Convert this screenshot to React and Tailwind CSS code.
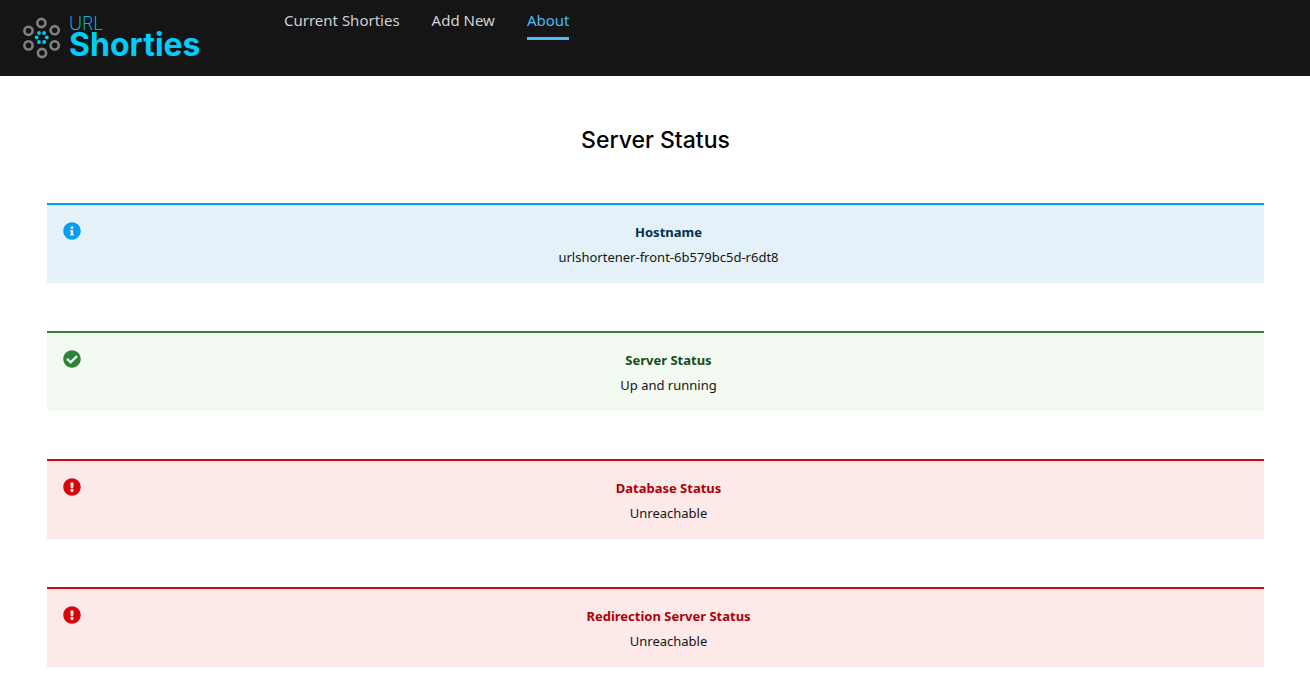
import { FaCheckCircle, FaExclamationCircle, FaInfoCircle } from "react-icons/fa";

const navItems = [
  { label: "Current Shorties", href: "#list" },
  { label: "Add New", href: "#new" },
  { label: "About", href: "#about", current: true },
];

const variants = {
  info: {
    Icon: FaInfoCircle,
    box: "border-[#059fee] bg-[#e4f1f9]",
    icon: "text-[#059fee]",
    title: "text-[#002f55]",
  },
  success: {
    Icon: FaCheckCircle,
    box: "border-[#2f8338] bg-[#f2faf1]",
    icon: "text-[#2f8338]",
    title: "text-[#154d20]",
  },
  danger: {
    Icon: FaExclamationCircle,
    box: "border-[#d6070b] bg-[#fde9e8]",
    icon: "text-[#d6070b]",
    title: "text-[#ad0009]",
  },
};

const statuses = [
  { variant: "info", title: "Hostname", text: "urlshortener-front-6b579bc5d-r6dt8" },
  { variant: "success", title: "Server Status", text: "Up and running" },
  { variant: "danger", title: "Database Status", text: "Unreachable" },
  { variant: "danger", title: "Redirection Server Status", text: "Unreachable" },
];

function LogoMark() {
  return (
    <svg viewBox="0 0 38 42" className="h-[42px] w-[38px] shrink-0" aria-hidden="true">
      <g fill="none" stroke="#808080" strokeWidth="2.6">
        <circle cx="18.4" cy="6" r="4.1" />
        <circle cx="31.7" cy="13.2" r="4.1" />
        <circle cx="31.7" cy="28.4" r="4.1" />
        <circle cx="19" cy="36" r="4.1" />
        <circle cx="5.5" cy="28.4" r="4.1" />
        <circle cx="5.5" cy="13.8" r="4.1" />
      </g>
      <g fill="#00cdfa">
        <circle cx="16" cy="16" r="1.9" />
        <circle cx="21.1" cy="16" r="1.9" />
        <circle cx="23.8" cy="20.4" r="1.9" />
        <circle cx="21.1" cy="25" r="1.9" />
        <circle cx="16" cy="25" r="1.9" />
        <circle cx="13.6" cy="20.4" r="1.9" />
      </g>
    </svg>
  );
}

function StatusAlert({ variant, title, text }) {
  const { Icon, box, icon, title: titleColor } = variants[variant];
  return (
    <section className={`flex gap-2 border-t-2 px-4 pt-[17px] pb-[15px] ${box}`}>
      <Icon className={`size-[18px] shrink-0 ${icon}`} aria-hidden="true" />
      <div className="grow text-center text-[13px] leading-[21px]">
        <h2 className={`font-bold ${titleColor}`}>{title}</h2>
        <p className="mt-1 text-[#151515]">{text}</p>
      </div>
    </section>
  );
}

export default function App() {
  return (
    <div className="bg-white font-['Noto_Sans',sans-serif]">
      <header className="flex h-[76px] items-start bg-[#151515]">
        <a
          href="#home"
          className="flex w-[268px] items-start gap-2 pt-[17px] pl-[23px] font-['Inter',sans-serif] text-[#00cdfa]"
        >
          <LogoMark />
          <span className="flex flex-col">
            <span className="text-lg leading-[14px] font-extralight">URL</span>
            <span className="text-[32px] leading-7 font-bold">Shorties</span>
          </span>
        </a>
        <nav>
          <ul className="flex">
            {navItems.map(({ label, href, current }) => (
              <li key={label} className="px-4">
                <a
                  href={href}
                  aria-current={current ? "page" : undefined}
                  className={`block border-b-3 pt-2 pb-[5px] text-[15px] leading-6 ${
                    current ? "border-[#4fbcf5] text-[#4fbcf5]" : "border-transparent text-[#d2d2d2]"
                  }`}
                >
                  {label}
                </a>
              </li>
            ))}
          </ul>
        </nav>
      </header>
      <main className="pt-12 pr-[46px] pb-6 pl-[47px]">
        <h1 className="text-center font-['Inter',sans-serif] text-[23px] leading-8 font-medium text-black">
          Server Status
        </h1>
        <div className="mt-[47px] flex flex-col gap-12">
          {statuses.map((status) => (
            <StatusAlert key={status.title} {...status} />
          ))}
        </div>
      </main>
    </div>
  );
}
